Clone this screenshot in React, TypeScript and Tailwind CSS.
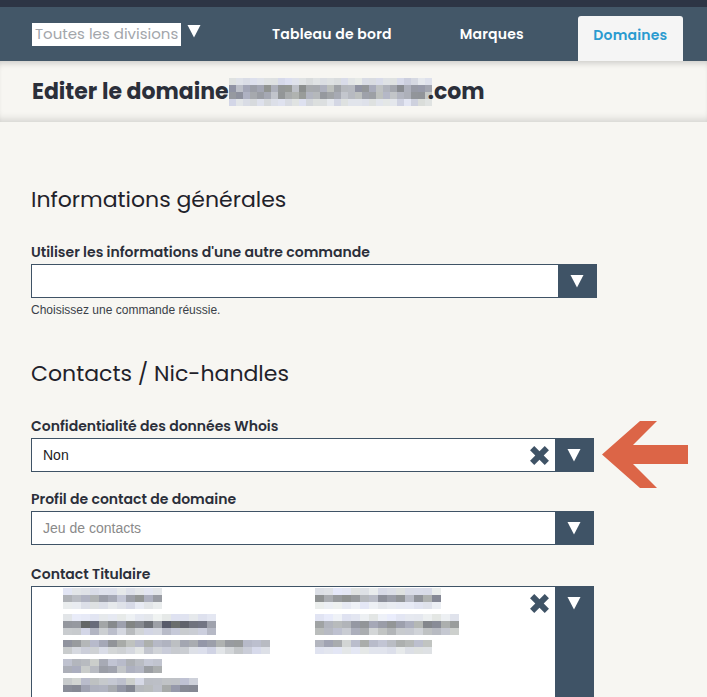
import * as React from "react";

const heading = "font-['Poppins','Open_Sans','Noto_Sans',sans-serif]";
const body = "font-['Liberation_Sans',Arial,sans-serif]";

// deterministic grey mosaic used to mask personal data
// rows: darkness per row, 0 = near white, 1 = dark grey
function Mosaic({
  width,
  rows,
  seed,
  cw = 9,
  ch = 7,
}: {
  width: number;
  rows: number[];
  seed: number;
  cw?: number;
  ch?: number;
}) {
  const cols = Math.ceil(width / cw);
  let s = seed;
  const rnd = () => {
    s = (s * 9301 + 49297) % 233280;
    return s / 233280;
  };
  const cells: React.ReactNode[] = [];
  rows.forEach((dark, r) => {
    for (let c = 0; c < cols; c++) {
      const v = Math.round(248 - dark * (70 + rnd() * 80) - rnd() * 14);
      const tint = Math.round(rnd() * 10);
      cells.push(
        <div
          key={`${r}-${c}`}
          style={{ background: `rgb(${v - tint},${v - tint + 3},${v + tint})` }}
        />
      );
    }
  });
  return (
    <div
      className="grid"
      style={{ width, gridTemplateColumns: `repeat(${cols}, ${cw}px)`, gridAutoRows: `${ch}px` }}
    >
      {cells}
    </div>
  );
}

function Caret({ className = "" }: { className?: string }) {
  return (
    <svg width="14" height="14" viewBox="0 0 14 14" className={className}>
      <path d="M0.5 1 H13.5 L7 13.5 Z" fill="#fff" />
    </svg>
  );
}

function Cross() {
  return (
    <svg width="21" height="21" viewBox="0 0 20 20">
      <path d="M1 5 L5 1 L10 6 L15 1 L19 5 L14 10 L19 15 L15 19 L10 14 L5 19 L1 15 L6 10 Z" fill="#3f5366" />
    </svg>
  );
}

function Select({
  value,
  placeholder,
  clearable,
  wide,
}: {
  value?: string;
  placeholder?: string;
  clearable?: boolean;
  wide?: boolean;
}) {
  return (
    <div className={`flex h-[34px] border border-[#3f5366] bg-white ${wide ? "w-[566px]" : "w-[563px]"}`}>
      <div className={`flex flex-1 items-center pl-[11px] text-[14px] ${body}`}>
        {value ? <span className="text-[#222]">{value}</span> : <span className="text-[#8a8a8a]">{placeholder}</span>}
      </div>
      {clearable && (
        <div className="flex w-[32px] items-center justify-center">
          <Cross />
        </div>
      )}
      <div className="flex w-[38px] items-center justify-center bg-[#3f5366]">
        <Caret />
      </div>
    </div>
  );
}

function Label({ children }: { children: React.ReactNode }) {
  return <div className={`${heading} mb-[3px] text-[14px] font-semibold leading-[18px] text-[#2b2f3a]`}>{children}</div>;
}

export default function App() {
  return (
    <div className="h-[697px] w-[707px] overflow-hidden bg-[#f7f6f2]">
      <div className="h-[7px] bg-[#2d3545]" />
      <nav className={`${heading} flex h-[54px] items-end bg-[#435768] text-[14px] font-semibold text-white`}>
        <div className="flex h-full items-center pl-[32px]">
          <div className="flex h-[23px] w-[149px] items-center bg-white pl-[3px] text-[15px] font-normal text-[#a3a6ab]">
            Toutes les divisions
          </div>
          <Caret className="ml-[6px] -mt-[6px]" />
        </div>
        <div className="flex h-full items-center pl-[71px] tracking-[0.2px]">Tableau de bord</div>
        <div className="flex h-full items-center pl-[68px] tracking-[0.2px]">Marques</div>
        <div className="ml-[54px] flex h-[45px] w-[105px] justify-center rounded-t-[3px] bg-[#f5f5f5] pt-[9px] tracking-[0.2px] text-[#2a9bd0]">
          Domaines
        </div>
      </nav>

      <header className="h-[61px] bg-[#f7f6f2] shadow-[inset_0_6px_6px_-4px_rgba(0,0,0,0.18),inset_0_-8px_8px_-6px_rgba(0,0,0,0.16)]">
        <div className={`${heading} flex h-[61px] items-center pl-[32px] text-[22px] font-bold text-[#2b2f3a]`}>
          Editer le domaine
          <Mosaic width={199} rows={[0.15, 0.7, 0.6, 0.15]} seed={7} cw={7} ch={7} />
          .com
        </div>
      </header>

      <main className="relative pl-[31px] pt-[62px]">
        <h2 className={`${heading} mb-[27px] text-[22px] leading-[32px] text-[#1f222a]`}>Informations générales</h2>
        <Label>Utiliser les informations d'une autre commande</Label>
        <Select wide />
        <div className={`${body} mt-[3px] text-[12px] text-[#3a3f48]`}>Choisissez une commande réussie.</div>

        <h2 className={`${heading} mt-[39px] mb-[27px] text-[22px] leading-[32px] text-[#1f222a]`}>Contacts / Nic-handles</h2>
        <Label>Confidentialité des données Whois</Label>
        <div className="relative">
          <Select value="Non" clearable />
          {/* pointer arrow next to the Whois select */}
          <svg width="88" height="68" viewBox="0 0 88 68" className="absolute left-[570px] top-[-17px]">
            <path d="M1 33.5 L39 0 L56 0 L32 24 L87 24 L87 43 L32 43 L56 67 L39 67 Z" fill="#dc6547" />
          </svg>
        </div>

        <div className="mt-[18px]">
          <Label>Profil de contact de domaine</Label>
          <Select placeholder="Jeu de contacts" />
        </div>

        <div className="mt-[20px]">
          <Label>Contact Titulaire</Label>
          <div className="flex h-[140px] w-[563px] border border-b-0 border-[#3f5366] bg-white">
            <div className="flex flex-1 pl-[31px] pt-[1px]">
              <div className="flex w-[252px] flex-col gap-[5px]">
                <Mosaic width={91} rows={[0.1, 0.6, 0.1]} seed={3} />
                <Mosaic width={147} rows={[0.05, 1, 0.35]} seed={11} />
                <Mosaic width={203} rows={[0.6, 0.25]} seed={19} />
                <Mosaic width={91} rows={[0.45, 0.55]} seed={23} />
                <Mosaic width={133} rows={[0.35, 0.7]} seed={31} />
              </div>
              <div className="flex flex-col gap-[5px]">
                <Mosaic width={119} rows={[0.1, 0.7, 0.05]} seed={5} />
                <Mosaic width={140} rows={[0.05, 0.7, 0.45]} seed={13} />
                <Mosaic width={111} rows={[0.5, 0.1]} seed={29} />
              </div>
            </div>
            <div className="flex w-[32px] justify-center pt-[6px]">
              <Cross />
            </div>
            <div className="flex w-[38px] justify-center bg-[#3f5366] pt-[9px]">
              <Caret />
            </div>
          </div>
        </div>
      </main>
    </div>
  );
}
